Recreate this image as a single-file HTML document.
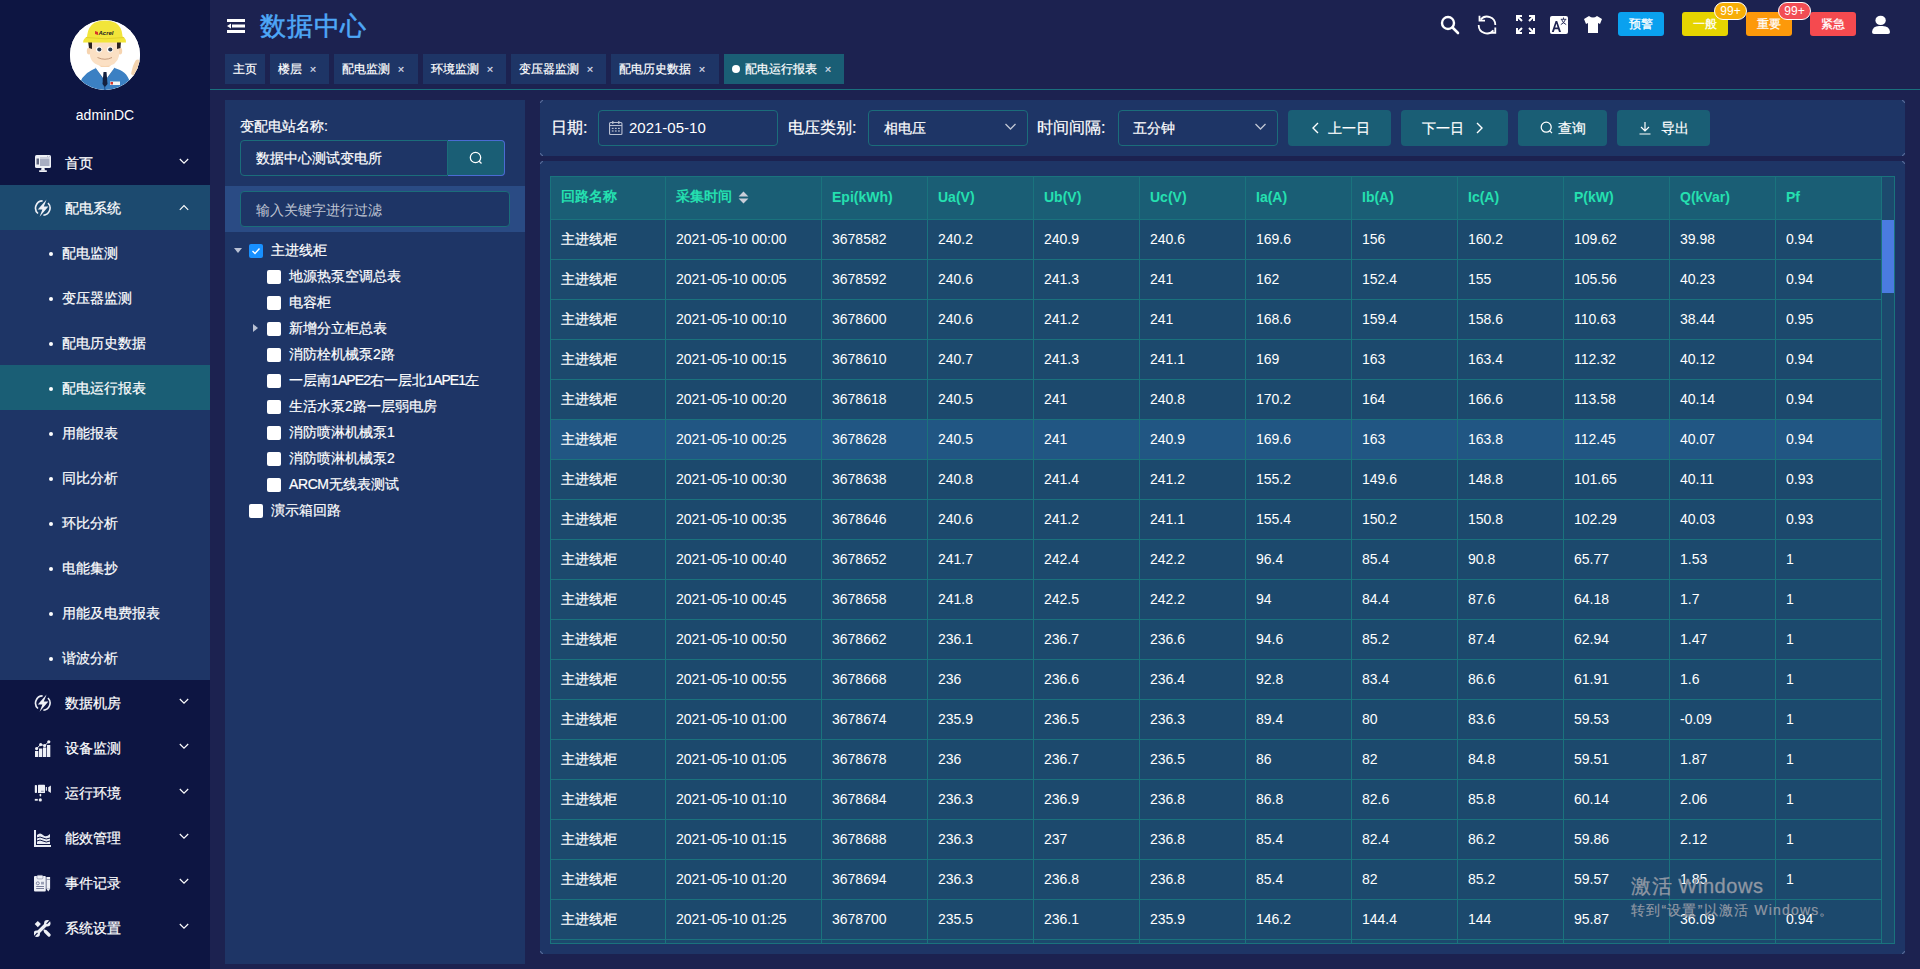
<!DOCTYPE html>
<html><head><meta charset="utf-8">
<style>
*{box-sizing:border-box;margin:0;padding:0}
html,body{width:1920px;height:969px;overflow:hidden}
body{background:#1c2250;font-family:"Liberation Sans",sans-serif;color:#fff;position:relative;font-size:14px}
.abs{position:absolute}
#side{left:0;top:0;width:210px;height:969px;background:#0d1542}
.avatar{left:70px;top:20px;width:70px;height:70px;border-radius:50%;background:#fff;overflow:hidden}
.uname{left:0;width:210px;top:106px;text-align:center;font-size:14px;line-height:18px;color:#fff}
.mi{left:0;width:210px;height:45px}
.mi .ic{position:absolute;left:34px;top:14px;width:18px;height:18px}
.mi .tx{position:absolute;left:65px;top:1px;line-height:45px;font-size:14px;color:#fff}
.mi .chev{position:absolute;left:179px;top:17px;width:10px;height:10px}
.sub{left:0;top:230px;width:210px;height:450px;background:#1e3566}
.si{position:absolute;left:0;width:210px;height:45px}
.si .dot{position:absolute;left:49px;top:22px;width:4px;height:4px;border-radius:50%;background:#fff}
.si .tx{position:absolute;left:62px;top:1px;line-height:45px;font-size:14px}
.si.act{background:#1a5e75}
.ham{left:227px;top:19px;width:18px;height:14px}
.title{left:260px;top:8px;font-size:26px;line-height:36px;color:#4ea7f7;letter-spacing:0.8px;-webkit-text-stroke:0.5px #4ea7f7}
.tab{top:54px;height:30px;background:#1e3566;font-size:12px;line-height:30px;color:#fff;padding-left:8px;white-space:nowrap}
.tab .x{display:inline-block;width:16px;margin-left:3px;text-align:center;font-size:11px;color:#c9d2e6}
.tab.act{background:#1a5e75}
.tline{left:210px;top:89px;width:1710px;height:1px;background:#1a6f7d}
.lp{left:225px;top:100px;width:300px;height:864px;background:#1e3566}
.lbl{font-size:14px;line-height:20px;color:#fff}
.inp{border:1px solid #1b6d7a;border-radius:4px;background:#1e3566}
.tree{font-size:14px;color:#fff}
.tr{position:absolute;height:26px;line-height:26px;white-space:nowrap}
.cb{position:absolute;width:14px;height:14px;background:#fff;border-radius:2px}
.rp{left:540px;top:100px;width:1365px;height:56px;background:#1e3566;border-radius:2px}
.tp{left:540px;top:161px;width:1365px;height:793px;background:#1e3566;border-radius:2px}
.tl{font-size:16px;line-height:20px;color:#fff}
.sel{height:36px;border:1px solid #1b6d7a;border-radius:4px;background:#1e3566;font-size:14px;line-height:34px}
.btn{top:110px;height:36px;background:#1a5e75;border-radius:4px;font-size:14px;line-height:36px;color:#fff;white-space:nowrap}
.twrap{left:550px;top:176px;width:1345px;height:768px;overflow:hidden;background:#1c496d;border-bottom:1px solid #1a737d;border-right:1px solid #1a737d}
table{border-collapse:collapse;table-layout:fixed;width:1331px}
td,th{border:1px solid #1a737d;height:40px;padding:0 10px 2px;text-align:left;font-size:14px;white-space:nowrap;overflow:hidden}
th{height:43px;background:#1a5e75;color:#25e0b0;font-weight:bold}
td{background:#1c496d;color:#fff}
tr.hv td{background:#215683}
td:first-child{padding-bottom:0}
.sb{left:1882px;top:176px;width:12px;height:767px;background:#1c496d;border-top:1px solid #1a737d}
.thumb{left:1882px;top:220px;width:12px;height:73px;background:#4a7be0}
.wm{left:1631px;top:873px;font-size:20px;letter-spacing:0.6px;color:#8f97a3;line-height:26px;white-space:nowrap;-webkit-text-stroke:0.3px #8f97a3}
.wm2{left:1631px;top:900px;font-size:14px;letter-spacing:1.2px;color:#8f97a3;line-height:20px;white-space:nowrap;-webkit-text-stroke:0.2px #8f97a3}
.mi .tx,.si .tx,.tab,.tree,.lbl,.tl,.btn span,td:first-child{-webkit-text-stroke:0.2px #fff}
</style></head><body>
<div id="side" class="abs">
 <div class="abs avatar">
  <svg width="70" height="70" viewBox="0 0 70 70">
   <rect width="70" height="70" fill="#fff"/>
   <path d="M61 54 Q63 44 66 40 Q70 38 70 44 L70 56 Q65 58 61 54Z" fill="#f3d3ae"/>
   <path d="M8 72 Q9 56 22 50 L28 47 L35 52 L42 47 L50 50 Q60 54 62 72Z" fill="#3b80c3"/>
   <path d="M26 47 L33 58 L35 70 M44 47 L37 58" stroke="#22558f" stroke-width="1.2" fill="none"/>
   <rect x="29" y="41" width="12" height="6" fill="#f6d4b0"/>
   <path d="M25 47 L33 58 L35 54 L37 58 L45 47 L41 45 L35 51 L29 45Z" fill="#fff"/>
   <path d="M33.5 52 L36.5 52 L37.5 64 L35 67 L32.5 64Z" fill="#14203e"/>
   <rect x="40" y="61.5" width="10" height="3.5" fill="#f4f4f4"/><rect x="40.5" y="62" width="2.5" height="2.5" fill="#d8352a"/>
      <ellipse cx="19" cy="31" rx="2.2" ry="3.5" fill="#f6d4b0"/><ellipse cx="50" cy="31" rx="2.2" ry="3.5" fill="#f6d4b0"/>
   <path d="M20 22 L49 22 L49 36 Q47 46 35 46 Q22 46 20 36Z" fill="#fbe0c4"/>
   <path d="M18 21 L22 21 L22 29 L19 28Z" fill="#2a2222"/><path d="M47 21 L51 21 L50.5 28 L47 29Z" fill="#2a2222"/>
   <circle cx="29" cy="29.5" r="3" fill="#fff"/><circle cx="40" cy="29.5" r="3" fill="#fff"/>
   <circle cx="29.3" cy="29.5" r="2.1" fill="#2c3a4f"/><circle cx="40.3" cy="29.5" r="2.1" fill="#2c3a4f"/>
   <path d="M27.5 37.5 Q35 41 42 37.5" stroke="#b98a6a" stroke-width="0.8" fill="none"/>
   <path d="M17 19 Q17 0.5 35 0.5 Q53 0.5 52.5 19Z" fill="#f2e53a"/>
   <path d="M13 22.5 Q14 16 20 16 L50 16 Q56 16 56 22.5Z" fill="#f2e53a"/>
   <path d="M16 17.5 Q35 20 54 17.5" stroke="#d6c520" stroke-width="0.6" fill="none"/>
   <path d="M25 11 L28 12 L28 15 L25 14Z" fill="#d8352a"/>
   <text x="28.5" y="15" font-family="Liberation Sans" font-size="6" font-weight="bold" font-style="italic" fill="#222">Acrel</text>
  </svg>
 </div>
 <div class="abs uname">adminDC</div>

 <div class="abs mi" style="top:140px">
  <svg class="ic" viewBox="0 0 18 18"><rect x="1" y="1" width="16" height="13" rx="1.5" fill="#eef0f6"/><rect x="6" y="5" width="9.5" height="7" fill="#a7adc2"/><rect x="6" y="3.5" width="9.5" height="1" fill="#a7adc2"/><rect x="2.5" y="4.5" width="2.5" height="6" fill="#5d647e"/><rect x="13" y="1.8" width="1" height="1" fill="#a7adc2"/><rect x="14.8" y="1.8" width="1" height="1" fill="#a7adc2"/><path d="M7.5 14 L10.5 14 L11 16.5 L7 16.5Z" fill="#eef0f6"/><rect x="5" y="16.3" width="8" height="1.7" rx="0.8" fill="#eef0f6"/></svg>
  <span class="tx">首页</span>
  <svg class="chev" viewBox="0 0 10 10"><path d="M0.8 2 L5 6.2 L9.2 2" stroke="#fff" stroke-width="1.15" fill="none"/></svg>
 </div>
 <div class="abs mi" style="top:185px;background:#1c4a6f">
  <svg class="ic" viewBox="0 0 18 18"><path d="M4 14.5 A7.2 7.2 0 0 1 8.6 1.9" fill="none" stroke="#eef0f6" stroke-width="1.6"/><path d="M14 4 A7.2 7.2 0 0 1 9.4 16.2" fill="none" stroke="#eef0f6" stroke-width="1.6"/><path d="M12.6 0.6 L3.8 10.6 L8.4 10.6 L5.6 17.8 L14.4 7.4 L9.8 7.4Z" fill="#eef0f6"/></svg>
  <span class="tx">配电系统</span>
  <svg class="chev" viewBox="0 0 10 10"><path d="M0.8 7.8 L5 3.6 L9.2 7.8" stroke="#fff" stroke-width="1.15" fill="none"/></svg>
 </div>
 <div class="abs sub">
  <div class="si" style="top:0"><i class="dot"></i><span class="tx">配电监测</span></div>
  <div class="si" style="top:45px"><i class="dot"></i><span class="tx">变压器监测</span></div>
  <div class="si" style="top:90px"><i class="dot"></i><span class="tx">配电历史数据</span></div>
  <div class="si act" style="top:135px"><i class="dot"></i><span class="tx">配电运行报表</span></div>
  <div class="si" style="top:180px"><i class="dot"></i><span class="tx">用能报表</span></div>
  <div class="si" style="top:225px"><i class="dot"></i><span class="tx">同比分析</span></div>
  <div class="si" style="top:270px"><i class="dot"></i><span class="tx">环比分析</span></div>
  <div class="si" style="top:315px"><i class="dot"></i><span class="tx">电能集抄</span></div>
  <div class="si" style="top:360px"><i class="dot"></i><span class="tx">用能及电费报表</span></div>
  <div class="si" style="top:405px"><i class="dot"></i><span class="tx">谐波分析</span></div>
 </div>
 <div class="abs mi" style="top:680px">
  <svg class="ic" viewBox="0 0 18 18"><path d="M4 14.5 A7.2 7.2 0 0 1 8.6 1.9" fill="none" stroke="#eef0f6" stroke-width="1.6"/><path d="M14 4 A7.2 7.2 0 0 1 9.4 16.2" fill="none" stroke="#eef0f6" stroke-width="1.6"/><path d="M12.6 0.6 L3.8 10.6 L8.4 10.6 L5.6 17.8 L14.4 7.4 L9.8 7.4Z" fill="#eef0f6"/></svg>
  <span class="tx">数据机房</span>
  <svg class="chev" viewBox="0 0 10 10"><path d="M0.8 2 L5 6.2 L9.2 2" stroke="#fff" stroke-width="1.15" fill="none"/></svg>
 </div>
 <div class="abs mi" style="top:725px">
  <svg class="ic" viewBox="0 0 18 18"><g fill="#eef0f6"><rect x="1" y="12" width="3.3" height="6"/><rect x="5" y="9.5" width="3.3" height="8.5"/><rect x="9" y="8.5" width="3.3" height="9.5"/><rect x="13" y="6" width="3.3" height="12"/><circle cx="2.6" cy="9.6" r="1.6"/><circle cx="6.7" cy="5.6" r="1.6"/><circle cx="10.6" cy="6.6" r="1.6"/><circle cx="14.8" cy="2.8" r="1.6"/></g><path d="M2.6 9.6 L6.7 5.6 L10.6 6.6 L14.8 2.8" stroke="#eef0f6" stroke-width="1" fill="none"/></svg>
  <span class="tx">设备监测</span>
  <svg class="chev" viewBox="0 0 10 10"><path d="M0.8 2 L5 6.2 L9.2 2" stroke="#fff" stroke-width="1.15" fill="none"/></svg>
 </div>
 <div class="abs mi" style="top:770px">
  <svg class="ic" viewBox="0 0 18 18"><g fill="#eef0f6"><rect x="0.8" y="1" width="2.2" height="8" rx="0.8"/><rect x="4" y="0.8" width="7" height="8.3" rx="0.6"/><rect x="11.8" y="3" width="1.1" height="3.7"/><path d="M14.2 3.2 L16.9 1.4 L16.9 9.1 L14.2 7.3Z"/><rect x="5.6" y="9.7" width="1.6" height="2.9" rx="0.8"/><circle cx="6.3" cy="15.9" r="1.6"/><rect x="0.8" y="14.9" width="3" height="1.8"/></g><rect x="7" y="6.7" width="2.7" height="1.1" fill="#8a90a8"/></svg>
  <span class="tx">运行环境</span>
  <svg class="chev" viewBox="0 0 10 10"><path d="M0.8 2 L5 6.2 L9.2 2" stroke="#fff" stroke-width="1.15" fill="none"/></svg>
 </div>
 <div class="abs mi" style="top:815px">
  <svg class="ic" viewBox="0 0 18 18"><path d="M1 1 L1 17 L17 17" stroke="#e8ecf4" stroke-width="2" fill="none"/><path d="M3 6 Q6 3 9 6 T16 5 L16 15 L3 15Z" fill="#e8ecf4"/><path d="M3 9 Q6 7 9 9 T16 9" stroke="#0d1542" stroke-width="1" fill="none"/><path d="M3 12 Q6 10 9 12 T16 12" stroke="#0d1542" stroke-width="1" fill="none"/></svg>
  <span class="tx">能效管理</span>
  <svg class="chev" viewBox="0 0 10 10"><path d="M0.8 2 L5 6.2 L9.2 2" stroke="#fff" stroke-width="1.15" fill="none"/></svg>
 </div>
 <div class="abs mi" style="top:860px">
  <svg class="ic" viewBox="0 0 18 18"><rect x="0" y="2" width="11.8" height="15.5" rx="1" fill="#eef0f6"/><rect x="3" y="1.2" width="5.9" height="3.7" rx="1" fill="#eef0f6" stroke="#6a7090" stroke-width="0.5"/><circle cx="3.8" cy="9.3" r="1.5" fill="none" stroke="#6a7090" stroke-width="0.8"/><rect x="7" y="7.8" width="3" height="2.7" fill="#9aa0b6"/><rect x="2.2" y="12" width="7.8" height="0.9" fill="#6a7090"/><rect x="2.2" y="14.1" width="7.8" height="0.9" fill="#6a7090"/><rect x="12.4" y="3" width="3.7" height="11.8" fill="#eef0f6"/><rect x="12.4" y="5" width="3.7" height="0.6" fill="#6a7090"/><path d="M12.4 14.8 L16.1 14.8 L14.25 17.6Z" fill="#eef0f6"/></svg>
  <span class="tx">事件记录</span>
  <svg class="chev" viewBox="0 0 10 10"><path d="M0.8 2 L5 6.2 L9.2 2" stroke="#fff" stroke-width="1.15" fill="none"/></svg>
 </div>
 <div class="abs mi" style="top:905px">
  <svg class="ic" viewBox="0 0 18 18"><g fill="#eef0f6" stroke="none"><path d="M3.8 2 L6.9 5.1 L3.8 8.2 L0.7 5.1Z"/></g><path d="M11.5 12.5 L15 16" stroke="#eef0f6" stroke-width="3.2" stroke-linecap="round"/><path d="M9.8 10.8 L11.6 12.6" stroke="#eef0f6" stroke-width="1.6"/><path d="M3 14.5 L13 4.5" stroke="#eef0f6" stroke-width="3.4"/><circle cx="13.3" cy="4.2" r="3.2" fill="#eef0f6"/><circle cx="2.8" cy="14.7" r="3.2" fill="#eef0f6"/><path d="M12.6 4.9 L16.5 1" stroke="#0d1542" stroke-width="1.1"/><path d="M3.5 14 L-0.5 18" stroke="#0d1542" stroke-width="1.1"/></svg>
  <span class="tx">系统设置</span>
  <svg class="chev" viewBox="0 0 10 10"><path d="M0.8 2 L5 6.2 L9.2 2" stroke="#fff" stroke-width="1.15" fill="none"/></svg>
 </div>
</div>
<svg class="abs ham" viewBox="0 0 18 14"><rect x="0" y="0" width="18" height="3" fill="#fff"/><rect x="5" y="5.5" width="13" height="3" fill="#fff"/><path d="M0 7 L4 4.5 L4 9.5Z" fill="#fff"/><rect x="0" y="11" width="18" height="3" fill="#fff"/></svg>
<div class="abs title">数据中心</div>

<svg class="abs" style="left:1440px;top:15px" width="20" height="20" viewBox="0 0 20 20"><circle cx="8" cy="8" r="6" fill="none" stroke="#fff" stroke-width="2.4"/><path d="M12.5 12.5 L18 18" stroke="#fff" stroke-width="2.6" stroke-linecap="round"/></svg>
<svg class="abs" style="left:1477px;top:15px" width="20" height="20" viewBox="0 0 20 20"><g fill="none" stroke="#fff" stroke-width="1.8"><path d="M3.6 4.6 A8.3 8.3 0 0 1 18.3 10"/><path d="M2.5 0.8 L2.5 5.6 L8 5.6"/><path d="M1.7 10 A8.3 8.3 0 0 0 16.4 15.4"/><path d="M18.3 12.5 L18.3 17.8 L12.5 17.8"/></g></svg>
<svg class="abs" style="left:1516px;top:15px" width="19" height="19" viewBox="0 0 19 19"><g stroke="#fff" stroke-width="2" fill="none"><path d="M1 6 L1 1 L6 1 M1 1 L6 6"/><path d="M13 1 L18 1 L18 6 M18 1 L13 6"/><path d="M1 13 L1 18 L6 18 M1 18 L6 13"/><path d="M18 13 L18 18 L13 18 M18 18 L13 13"/></g></svg>
<svg class="abs" style="left:1550px;top:16px" width="18" height="18" viewBox="0 0 18 18"><rect width="18" height="18" rx="2" fill="#fff"/><path d="M1.8 16 L5.6 5 L7.2 5 L11 16 L9 16 L8.1 13.2 L4.7 13.2 L3.8 16Z M5.2 11.6 L7.6 11.6 L6.4 7.6Z" fill="#1d2251"/><g stroke="#1d2251" stroke-width="0.9" fill="none"><path d="M13.5 1.5 L13.5 3"/><path d="M10.8 3.3 L16.3 3.3"/><path d="M11.6 3.5 Q13 7.5 16.2 8.6"/><path d="M15.4 3.5 Q14 7.5 10.8 8.6"/></g></svg>
<svg class="abs" style="left:1583px;top:15px" width="20" height="19" viewBox="0 0 20 19"><path d="M6 1 Q10 4 14 1 L19 4 L17 9 L15 8 L15 18 L5 18 L5 8 L3 9 L1 4Z" fill="#fff"/></svg>

<div class="abs" style="left:1618px;top:12px;width:46px;height:24px;background:#0aa1ef;border-radius:3px;font-size:12px;line-height:24px;text-align:center;-webkit-text-stroke:0.25px #fff">预警</div>
<div class="abs" style="left:1682px;top:12px;width:46px;height:24px;background:#e6d400;border-radius:3px;font-size:12px;line-height:24px;text-align:center;-webkit-text-stroke:0.25px #fff">一般</div>
<div class="abs" style="left:1746px;top:12px;width:46px;height:24px;background:#fd990a;border-radius:3px;font-size:12px;line-height:24px;text-align:center;-webkit-text-stroke:0.25px #fff">重要</div>
<div class="abs" style="left:1810px;top:12px;width:46px;height:24px;background:#f54a4f;border-radius:3px;font-size:12px;line-height:24px;text-align:center;-webkit-text-stroke:0.25px #fff">紧急</div>
<div class="abs" style="left:1714px;top:2px;width:33px;height:18px;background:#f7ae06;border:1px solid #fff;border-radius:9px;font-size:12px;line-height:16px;text-align:center">99+</div>
<div class="abs" style="left:1778px;top:2px;width:33px;height:18px;background:#f24d54;border:1px solid #fff;border-radius:9px;font-size:12px;line-height:16px;text-align:center">99+</div>
<svg class="abs" style="left:1871px;top:15px" width="20" height="20" viewBox="0 0 20 20"><ellipse cx="9.6" cy="5.4" rx="5.2" ry="4.7" fill="#fff"/><path d="M1 17 Q1.5 11 8 11 L11.5 11 Q18.5 11 19 17 Q19 19 17 19 L3 19 Q1 19 1 17Z" fill="#fff"/></svg>

<div class="abs tab" style="left:225px;width:40px">主页</div>
<div class="abs tab" style="left:270px;width:59px">楼层<span class="x">×</span></div>
<div class="abs tab" style="left:334px;width:84px">配电监测<span class="x">×</span></div>
<div class="abs tab" style="left:423px;width:83px">环境监测<span class="x">×</span></div>
<div class="abs tab" style="left:511px;width:95px">变压器监测<span class="x">×</span></div>
<div class="abs tab" style="left:611px;width:108px">配电历史数据<span class="x">×</span></div>
<div class="abs tab act" style="left:724px;width:120px"><i style="display:inline-block;width:8px;height:8px;border-radius:50%;background:#fff;margin-right:5px;vertical-align:0px"></i>配电运行报表<span class="x">×</span></div>
<div class="abs tline"></div>
<div class="abs lp"></div>
<div class="abs lbl" style="left:240px;top:116px">变配电站名称:</div>
<div class="abs inp" style="left:240px;top:140px;width:208px;height:36px;border-radius:4px 0 0 4px"></div>
<div class="abs" style="left:256px;top:140px;line-height:36px;font-size:14px;-webkit-text-stroke:0.2px #fff">数据中心测试变电所</div>
<div class="abs" style="left:448px;top:140px;width:57px;height:36px;background:#1a5e75;border:1px solid #4b6bd3;border-left:0;border-radius:0 4px 4px 0"></div>
<svg class="abs" style="left:469px;top:151px" width="14" height="14" viewBox="0 0 14 14"><circle cx="6.5" cy="6.5" r="5.2" fill="none" stroke="#fff" stroke-width="1.25"/><path d="M10.2 10.2 L12.5 12.5" stroke="#fff" stroke-width="1.25"/></svg>
<div class="abs" style="left:225px;top:186px;width:300px;height:46px;background:#2a4b84"></div>
<div class="abs inp" style="left:240px;top:191px;width:270px;height:36px;"></div>
<div class="abs" style="left:256px;top:192px;line-height:36px;font-size:14px;color:#c0c6d4">输入关键字进行过滤</div>

<div class="abs tree" style="left:0;top:0">
 <svg class="abs" style="left:234px;top:248px" width="8" height="6" viewBox="0 0 8 6"><path d="M0 0 L8 0 L4 5Z" fill="#b9c1d4"/></svg>
 <div class="cb" style="left:249px;top:244px;background:#1890ff"><svg width="14" height="14" viewBox="0 0 14 14"><path d="M3.5 7 L6 9.5 L10.5 4.5" stroke="#fff" stroke-width="1.4" fill="none"/></svg></div>
 <div class="tr" style="left:271px;top:237px">主进线柜</div>
 <div class="cb" style="left:267px;top:270px"></div><div class="tr" style="left:289px;top:263px">地源热泵空调总表</div>
 <div class="cb" style="left:267px;top:296px"></div><div class="tr" style="left:289px;top:289px">电容柜</div>
 <svg class="abs" style="left:253px;top:324px" width="6" height="8" viewBox="0 0 6 8"><path d="M0 0 L5 4 L0 8Z" fill="#b9c1d4"/></svg>
 <div class="cb" style="left:267px;top:322px"></div><div class="tr" style="left:289px;top:315px">新增分立柜总表</div>
 <div class="cb" style="left:267px;top:348px"></div><div class="tr" style="left:289px;top:341px">消防栓机械泵2路</div>
 <div class="cb" style="left:267px;top:374px"></div><div class="tr" style="left:289px;top:367px">一层南<span style="letter-spacing:-0.9px">1APE2</span>右一层北<span style="letter-spacing:-0.9px">1APE1</span>左</div>
 <div class="cb" style="left:267px;top:400px"></div><div class="tr" style="left:289px;top:393px">生活水泵2路一层弱电房</div>
 <div class="cb" style="left:267px;top:426px"></div><div class="tr" style="left:289px;top:419px">消防喷淋机械泵1</div>
 <div class="cb" style="left:267px;top:452px"></div><div class="tr" style="left:289px;top:445px">消防喷淋机械泵2</div>
 <div class="cb" style="left:267px;top:478px"></div><div class="tr" style="left:289px;top:471px"><span style="letter-spacing:-0.4px">ARCM</span>无线表测试</div>
 <div class="cb" style="left:249px;top:504px"></div><div class="tr" style="left:271px;top:497px">演示箱回路</div>
</div>
<div class="abs rp"></div><svg class="abs" style="left:540px;top:100px" width="5" height="5"><path d="M0.5 3 Q0.5 0.5 3 0.5" stroke="rgba(140,158,200,0.6)" fill="none"/></svg><svg class="abs" style="left:1900px;top:100px" width="5" height="5"><path d="M2 0.5 Q4.5 0.5 4.5 3" stroke="rgba(140,158,200,0.6)" fill="none"/></svg><svg class="abs" style="left:540px;top:151px" width="5" height="5"><path d="M0.5 2 Q0.5 4.5 3 4.5" stroke="rgba(140,158,200,0.6)" fill="none"/></svg><svg class="abs" style="left:1900px;top:151px" width="5" height="5"><path d="M4.5 2 Q4.5 4.5 2 4.5" stroke="rgba(140,158,200,0.6)" fill="none"/></svg>
<div class="abs tl" style="left:551px;top:118px">日期:</div>
<div class="abs sel" style="left:598px;top:110px;width:180px"></div>
<svg class="abs" style="left:609px;top:121px" width="14" height="14" viewBox="0 0 14 14"><g fill="none" stroke="#b9c0d2" stroke-width="1.1"><rect x="0.55" y="1.55" width="12.4" height="11.9" rx="1"/><path d="M0.6 4.5 L13 4.5"/></g><g fill="#b9c0d2"><rect x="3.2" y="0" width="1.2" height="3"/><rect x="9.2" y="0" width="1.2" height="3"/><rect x="2.8" y="6.8" width="1.8" height="1.2"/><rect x="5.9" y="6.8" width="1.8" height="1.2"/><rect x="9" y="6.8" width="1.8" height="1.2"/><rect x="2.8" y="9.4" width="1.8" height="1.2"/><rect x="5.9" y="9.4" width="1.8" height="1.2"/><rect x="9" y="9.4" width="1.8" height="1.2"/></g></svg>
<div class="abs" style="left:629px;top:110px;line-height:36px;font-size:15px">2021-05-10</div>
<div class="abs tl" style="left:788px;top:118px">电压类别:</div>
<div class="abs sel" style="left:868px;top:110px;width:160px"></div>
<div class="abs" style="left:884px;top:110px;line-height:36px;font-size:14px;-webkit-text-stroke:0.2px #fff">相电压</div>
<svg class="abs" style="left:1005px;top:123px" width="11" height="8" viewBox="0 0 11 8"><path d="M0.5 1 L5.5 6 L10.5 1" stroke="#c0c6d4" stroke-width="1.3" fill="none"/></svg>
<div class="abs tl" style="left:1037px;top:118px">时间间隔:</div>
<div class="abs sel" style="left:1118px;top:110px;width:160px"></div>
<div class="abs" style="left:1133px;top:110px;line-height:36px;font-size:14px;-webkit-text-stroke:0.2px #fff">五分钟</div>
<svg class="abs" style="left:1255px;top:123px" width="11" height="8" viewBox="0 0 11 8"><path d="M0.5 1 L5.5 6 L10.5 1" stroke="#c0c6d4" stroke-width="1.3" fill="none"/></svg>
<div class="abs btn" style="left:1288px;width:103px"><svg class="abs" style="left:24px;top:12px" width="7" height="12" viewBox="0 0 7 11"><path d="M6 0.5 L1 5.5 L6 10.5" stroke="#fff" stroke-width="1.4" fill="none"/></svg><span class="abs" style="left:40px">上一日</span></div>
<div class="abs btn" style="left:1401px;width:107px"><span class="abs" style="left:21px">下一日</span><svg class="abs" style="left:75px;top:12px" width="7" height="12" viewBox="0 0 7 11"><path d="M1 0.5 L6 5.5 L1 10.5" stroke="#fff" stroke-width="1.4" fill="none"/></svg></div>
<div class="abs btn" style="left:1518px;width:89px"><svg class="abs" style="left:22px;top:11px" width="14" height="14" viewBox="0 0 14 14"><circle cx="6.2" cy="6.2" r="5" fill="none" stroke="#fff" stroke-width="1.25"/><path d="M9.8 9.8 L12 12.2" stroke="#fff" stroke-width="1.25"/></svg><span class="abs" style="left:40px">查询</span></div>
<div class="abs btn" style="left:1617px;width:93px"><svg class="abs" style="left:22px;top:12px" width="12" height="13" viewBox="0 0 12 13"><path d="M6 0 L6 9 M2 5 L6 9 L10 5 M0.5 12 L11.5 12" stroke="#fff" stroke-width="1.2" fill="none"/></svg><span class="abs" style="left:44px">导出</span></div>

<div class="abs tp"></div><svg class="abs" style="left:540px;top:161px" width="5" height="5"><path d="M0.5 3 Q0.5 0.5 3 0.5" stroke="rgba(140,158,200,0.6)" fill="none"/></svg><svg class="abs" style="left:1900px;top:161px" width="5" height="5"><path d="M2 0.5 Q4.5 0.5 4.5 3" stroke="rgba(140,158,200,0.6)" fill="none"/></svg><svg class="abs" style="left:540px;top:949px" width="5" height="5"><path d="M0.5 2 Q0.5 4.5 3 4.5" stroke="rgba(140,158,200,0.6)" fill="none"/></svg><svg class="abs" style="left:1900px;top:949px" width="5" height="5"><path d="M4.5 2 Q4.5 4.5 2 4.5" stroke="rgba(140,158,200,0.6)" fill="none"/></svg>
<div class="abs twrap">
<table>
<colgroup><col style="width:115px"><col style="width:156px"><col span="10" style="width:106px"></colgroup>
<thead><tr><th>回路名称</th><th>采集时间 <svg width="11" height="13" viewBox="0 0 11 13" style="vertical-align:-3px;margin-left:2px"><path d="M5.5 0.6 L10.4 5.6 L0.6 5.6Z" fill="#c9ced9"/><path d="M5.5 12.4 L10.4 7.4 L0.6 7.4Z" fill="#c9ced9"/></svg></th><th>Epi(kWh)</th><th>Ua(V)</th><th>Ub(V)</th><th>Uc(V)</th><th>Ia(A)</th><th>Ib(A)</th><th>Ic(A)</th><th>P(kW)</th><th>Q(kVar)</th><th>Pf</th></tr></thead>
<tbody>
<tr><td>主进线柜</td><td>2021-05-10 00:00</td><td>3678582</td><td>240.2</td><td>240.9</td><td>240.6</td><td>169.6</td><td>156</td><td>160.2</td><td>109.62</td><td>39.98</td><td>0.94</td></tr>
<tr><td>主进线柜</td><td>2021-05-10 00:05</td><td>3678592</td><td>240.6</td><td>241.3</td><td>241</td><td>162</td><td>152.4</td><td>155</td><td>105.56</td><td>40.23</td><td>0.94</td></tr>
<tr><td>主进线柜</td><td>2021-05-10 00:10</td><td>3678600</td><td>240.6</td><td>241.2</td><td>241</td><td>168.6</td><td>159.4</td><td>158.6</td><td>110.63</td><td>38.44</td><td>0.95</td></tr>
<tr><td>主进线柜</td><td>2021-05-10 00:15</td><td>3678610</td><td>240.7</td><td>241.3</td><td>241.1</td><td>169</td><td>163</td><td>163.4</td><td>112.32</td><td>40.12</td><td>0.94</td></tr>
<tr><td>主进线柜</td><td>2021-05-10 00:20</td><td>3678618</td><td>240.5</td><td>241</td><td>240.8</td><td>170.2</td><td>164</td><td>166.6</td><td>113.58</td><td>40.14</td><td>0.94</td></tr>
<tr class="hv"><td>主进线柜</td><td>2021-05-10 00:25</td><td>3678628</td><td>240.5</td><td>241</td><td>240.9</td><td>169.6</td><td>163</td><td>163.8</td><td>112.45</td><td>40.07</td><td>0.94</td></tr>
<tr><td>主进线柜</td><td>2021-05-10 00:30</td><td>3678638</td><td>240.8</td><td>241.4</td><td>241.2</td><td>155.2</td><td>149.6</td><td>148.8</td><td>101.65</td><td>40.11</td><td>0.93</td></tr>
<tr><td>主进线柜</td><td>2021-05-10 00:35</td><td>3678646</td><td>240.6</td><td>241.2</td><td>241.1</td><td>155.4</td><td>150.2</td><td>150.8</td><td>102.29</td><td>40.03</td><td>0.93</td></tr>
<tr><td>主进线柜</td><td>2021-05-10 00:40</td><td>3678652</td><td>241.7</td><td>242.4</td><td>242.2</td><td>96.4</td><td>85.4</td><td>90.8</td><td>65.77</td><td>1.53</td><td>1</td></tr>
<tr><td>主进线柜</td><td>2021-05-10 00:45</td><td>3678658</td><td>241.8</td><td>242.5</td><td>242.2</td><td>94</td><td>84.4</td><td>87.6</td><td>64.18</td><td>1.7</td><td>1</td></tr>
<tr><td>主进线柜</td><td>2021-05-10 00:50</td><td>3678662</td><td>236.1</td><td>236.7</td><td>236.6</td><td>94.6</td><td>85.2</td><td>87.4</td><td>62.94</td><td>1.47</td><td>1</td></tr>
<tr><td>主进线柜</td><td>2021-05-10 00:55</td><td>3678668</td><td>236</td><td>236.6</td><td>236.4</td><td>92.8</td><td>83.4</td><td>86.6</td><td>61.91</td><td>1.6</td><td>1</td></tr>
<tr><td>主进线柜</td><td>2021-05-10 01:00</td><td>3678674</td><td>235.9</td><td>236.5</td><td>236.3</td><td>89.4</td><td>80</td><td>83.6</td><td>59.53</td><td>-0.09</td><td>1</td></tr>
<tr><td>主进线柜</td><td>2021-05-10 01:05</td><td>3678678</td><td>236</td><td>236.7</td><td>236.5</td><td>86</td><td>82</td><td>84.8</td><td>59.51</td><td>1.87</td><td>1</td></tr>
<tr><td>主进线柜</td><td>2021-05-10 01:10</td><td>3678684</td><td>236.3</td><td>236.9</td><td>236.8</td><td>86.8</td><td>82.6</td><td>85.8</td><td>60.14</td><td>2.06</td><td>1</td></tr>
<tr><td>主进线柜</td><td>2021-05-10 01:15</td><td>3678688</td><td>236.3</td><td>237</td><td>236.8</td><td>85.4</td><td>82.4</td><td>86.2</td><td>59.86</td><td>2.12</td><td>1</td></tr>
<tr><td>主进线柜</td><td>2021-05-10 01:20</td><td>3678694</td><td>236.3</td><td>236.8</td><td>236.8</td><td>85.4</td><td>82</td><td>85.2</td><td>59.57</td><td>1.85</td><td>1</td></tr>
<tr><td>主进线柜</td><td>2021-05-10 01:25</td><td>3678700</td><td>235.5</td><td>236.1</td><td>235.9</td><td>146.2</td><td>144.4</td><td>144</td><td>95.87</td><td>36.09</td><td>0.94</td></tr>
<tr><td>主进线柜</td><td>2021-05-10 01:30</td><td>3678706</td><td>235.6</td><td>236.2</td><td>236</td><td>146.4</td><td>144.6</td><td>144.2</td><td>96.02</td><td>36.11</td><td>0.94</td></tr>
</tbody></table>
</div>
<div class="abs sb"></div>
<div class="abs thumb"></div>
<div class="abs wm">激活 Windows</div>
<div class="abs wm2">转到“设置”以激活 Windows。</div>
</body></html>
